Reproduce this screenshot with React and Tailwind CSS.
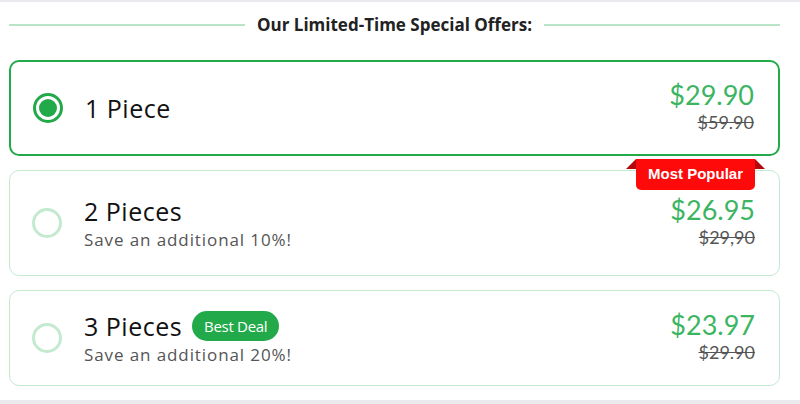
const offers = [
  {qty: '1 Piece', price: '$29.90', was: '$59.90', selected: true},
  {qty: '2 Pieces', note: 'Save an additional 10%!', price: '$26.95', was: '$29,90', popular: true},
  {qty: '3 Pieces', note: 'Save an additional 20%!', price: '$23.97', was: '$29.90', bestDeal: true},
];

function Radio({checked}) {
  if (checked) {
    return (
      <span className="flex h-[30px] w-[30px] shrink-0 items-center justify-center rounded-full border-[3px] border-[#22a94a] bg-white">
        <span className="h-[18px] w-[18px] rounded-full bg-[#22a94a]" />
      </span>
    );
  }
  return <span className="h-[30px] w-[30px] shrink-0 rounded-full border-[3px] border-[#c3e9cf] bg-white" />;
}

function OfferCard({offer}) {
  return (
    <div
      className={
        'relative flex items-center rounded-[10px] bg-white pl-[22px] pr-[24px] ' +
        (offer.selected ? 'h-[96px] border-2 border-[#22a94a]' : 'border border-[#c3e9cf]') +
        (offer.popular ? ' h-[106px]' : '') +
        (offer.bestDeal ? ' h-[96px]' : '')
      }
    >
      {/* Most popular ribbon */}
      {offer.popular && (
        <div className="absolute -top-[12px] right-[14px] flex">
          <span className="h-0 w-0 border-b-[10px] border-l-[10px] border-b-[#b3090d] border-l-transparent" />
          <span className="flex h-[31px] items-center rounded-b-[5px] bg-[#ff0a0a] px-[12px] font-['Liberation_Sans',sans-serif] text-[15px] font-bold text-white">
            Most Popular
          </span>
          <span className="h-0 w-0 border-r-[10px] border-b-[10px] border-b-[#b3090d] border-r-transparent" />
        </div>
      )}

      <Radio checked={offer.selected} />

      <div className="ml-[22px] flex flex-1 flex-col font-['Open_Sans',sans-serif]">
        <div className="flex items-center gap-[10px]">
          <span className="text-[25px] leading-[30px] tracking-[0.5px] text-[#111]">{offer.qty}</span>
          {offer.bestDeal && (
            <span className="rounded-full bg-[#22a94a] px-[12px] py-[4px] text-[15px] leading-[22px] tracking-[-0.3px] text-white">
              Best Deal
            </span>
          )}
        </div>
        {offer.note && (
          <span className="mt-[4px] text-[17px] leading-[20px] tracking-[0.9px] text-[#555]">{offer.note}</span>
        )}
      </div>

      <div className="-mt-[4px] flex flex-col items-end font-['Lato',sans-serif]">
        <span className="text-[27px] leading-[32px] text-[#3cb563]">{offer.price}</span>
        <span className="text-[18px] leading-[22px] text-[#555] line-through">{offer.was}</span>
      </div>
    </div>
  );
}

export default function App() {
  return (
    <div className="flex h-[404px] w-[800px] flex-col border-t-2 border-b-4 border-[#e9e9ee] bg-white">
      <div className="ml-[9px] w-[771px]">
        {/* Heading */}
        <div className="flex h-[46px] items-center gap-[12px]">
          <span className="h-[2px] flex-1 bg-[#b9e5c6]" />
          <span className="font-['Open_Sans',sans-serif] text-[17px] font-bold text-[#222]">
            Our Limited-Time Special Offers:
          </span>
          <span className="h-[2px] flex-1 bg-[#b9e5c6]" />
        </div>

        <div className="mt-[12px] flex flex-col gap-[14px]">
          {offers.map((offer) => (
            <OfferCard key={offer.qty} offer={offer} />
          ))}
        </div>
      </div>
    </div>
  );
}
